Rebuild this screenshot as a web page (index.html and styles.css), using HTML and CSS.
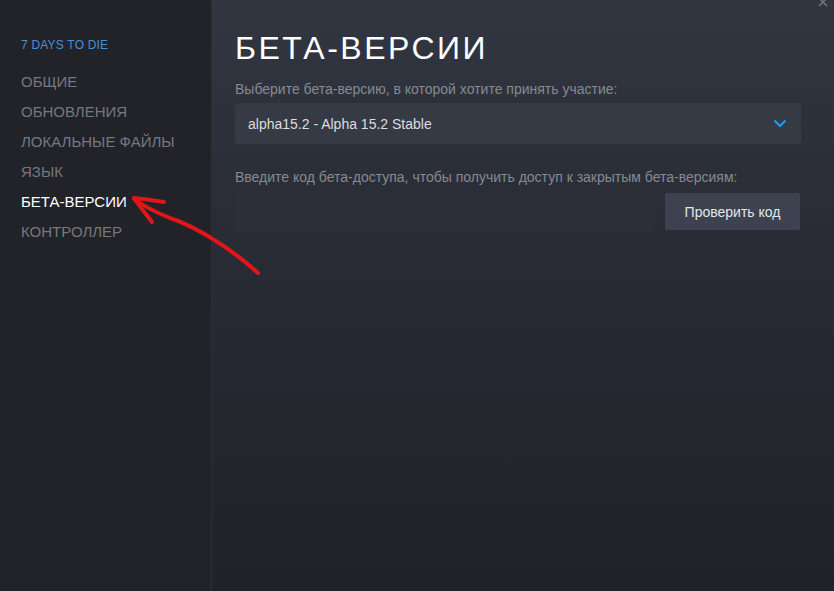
FILE: index.html
```html
<!DOCTYPE html>
<html lang="ru">
<head>
    <meta charset="UTF-8">
    <title>Свойства - 7 Days to Die</title>
    <link rel="stylesheet" href="styles.css">
</head>
<body>
    <div class="window">
        <aside class="sidebar">
            <div class="game-title">7 DAYS TO DIE</div>
            <nav class="menu">
                <div class="menu-item">Общие</div>
                <div class="menu-item">Обновления</div>
                <div class="menu-item">Локальные файлы</div>
                <div class="menu-item">Язык</div>
                <div class="menu-item active">Бета-версии</div>
                <div class="menu-item">Контроллер</div>
            </nav>
        </aside>

        <main class="content">
            <svg class="close" width="10" height="10" viewBox="0 0 10 10">
                <path d="M1 1 L9 9 M9 1 L1 9" stroke="#74777e" stroke-width="1.5"/>
            </svg>
            <h1>БЕТА-ВЕРСИИ</h1>

            <div class="field-label">Выберите бета-версию, в которой хотите принять участие:</div>
            <div class="select">
                <span>alpha15.2 - Alpha 15.2 Stable</span>
                <svg class="chevron" width="14" height="9" viewBox="0 0 14 9">
                    <path d="M1.5 1.5 L7 7 L12.5 1.5" fill="none" stroke="#1a9fff" stroke-width="2"/>
                </svg>
            </div>

            <div class="field-label second">Введите код бета-доступа, чтобы получить доступ к закрытым бета-версиям:</div>
            <div class="code-row">
                <div class="code-input"></div>
                <button class="check-btn">Проверить код</button>
            </div>
        </main>
    </div>

    <!-- red hand-drawn annotation arrow -->
    <svg class="annotation" width="834" height="591" viewBox="0 0 834 591">
        <path d="M258 273 C 235 252, 200 228, 170 218 C 155 212, 145 207, 134 199" fill="none" stroke="#e0161b" stroke-width="4" stroke-linecap="round"/>
        <path d="M164 202 C 152 200, 142 199, 134 198 C 140 207, 146 214, 152 222" fill="none" stroke="#e0161b" stroke-width="4" stroke-linecap="round" stroke-linejoin="round"/>
    </svg>
</body>
</html>
```

FILE: styles.css
```css
* {
    margin: 0;
    padding: 0;
    box-sizing: border-box;
}

body {
    width: 834px;
    height: 591px;
    overflow: hidden;
    font-family: Arial, 'Liberation Sans', sans-serif;
    background: #23252c;
}

.window {
    display: flex;
    height: 591px;
}

.sidebar {
    width: 211px;
    flex-shrink: 0;
    background: #222329;
    padding: 38px 0 0 21px;
}

.game-title {
    color: #4a8ed4;
    font-size: 12px;
    letter-spacing: 0.2px;
    margin-bottom: 21px;
}

.menu {
    display: flex;
    flex-direction: column;
}

.menu-item {
    height: 30px;
    line-height: 18px;
    font-size: 15px;
    text-transform: uppercase;
    color: #75787e;
}

.menu-item.active {
    color: #ffffff;
}

.content {
    position: relative;
    flex: 1;
    background: linear-gradient(180deg, #313641 0%, #292c35 40%, #202228 100%);
    border-left: 1px solid #2b2e36;
    padding: 28px 33px 0 23px;
}

.close {
    position: absolute;
    top: -3px;
    right: 6px;
}

h1 {
    color: #ffffff;
    font-size: 32px;
    font-weight: normal;
    letter-spacing: 2.5px;
    line-height: 40px;
    margin-bottom: 13px;
}

.field-label {
    color: #868a91;
    font-size: 14px;
    line-height: 16px;
    margin-bottom: 6px;
}

.field-label.second {
    margin-top: 25px;
    margin-bottom: 8px;
}

.select {
    height: 41px;
    background: #363a45;
    border-radius: 2px;
    display: flex;
    align-items: center;
    justify-content: space-between;
    padding: 0 14px 0 13px;
    color: #dcdedf;
    font-size: 14px;
}

.code-row {
    display: flex;
    align-items: flex-start;
    gap: 11px;
}

.code-input {
    width: 419px;
    height: 39px;
    background: #2c2f38;
    border-radius: 2px;
}

.check-btn {
    width: 135px;
    height: 37px;
    background: #3d4150;
    border: none;
    border-radius: 2px;
    color: #e4e6e8;
    font-family: Arial, 'Liberation Sans', sans-serif;
    font-size: 14px;
}

.annotation {
    position: absolute;
    top: 0;
    left: 0;
    pointer-events: none;
}
```
